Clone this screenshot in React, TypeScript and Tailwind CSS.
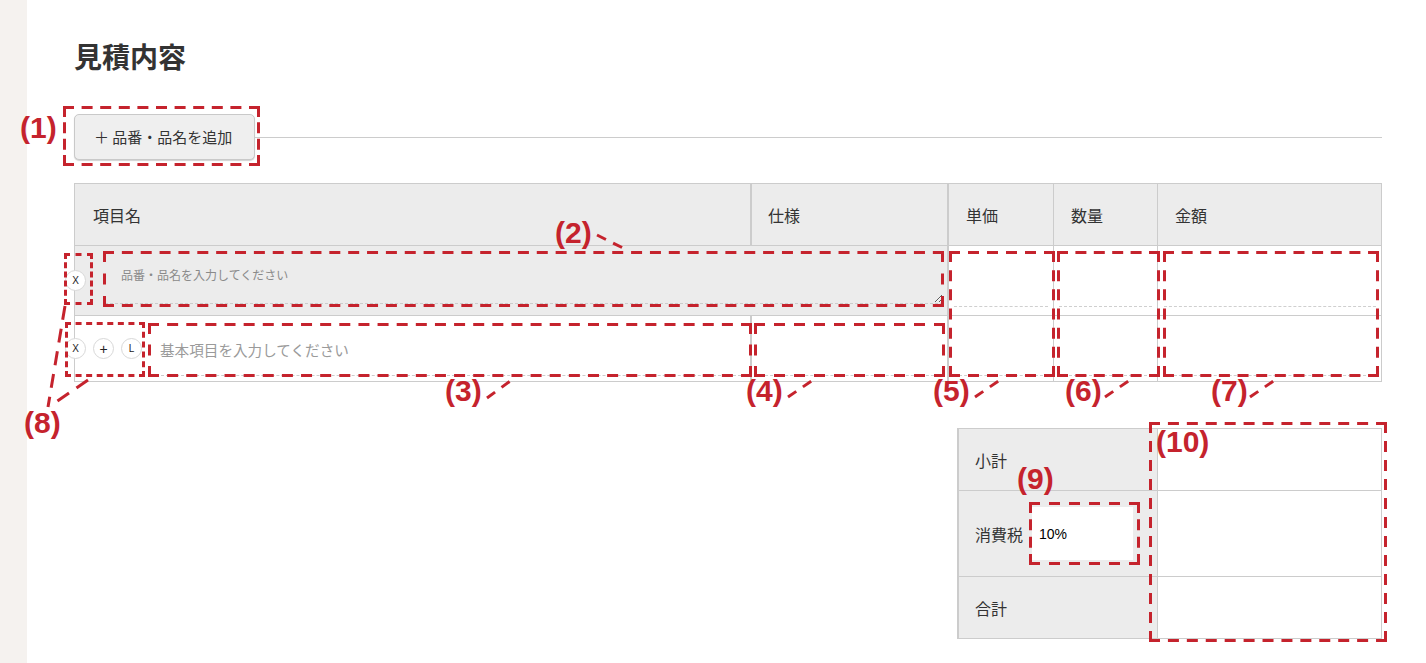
import React from "react";

const RED = "#c5232d";

function Circle({ label, big }: { label: string; big?: boolean }) {
  return (
    <div
      className={`flex h-[21px] w-[21px] shrink-0 items-center justify-center rounded-full border border-[#d8d8d8] bg-white font-['Liberation_Sans',sans-serif] leading-none text-[#222] ${
        big ? "text-[14px]" : "text-[10px]"
      }`}
    >
      {label}
    </div>
  );
}

function Label({ text, className }: { text: string; className: string }) {
  return (
    <div
      className={`pointer-events-none absolute font-['Liberation_Sans',sans-serif] text-[30px] font-bold leading-[30px] text-[#c5232d] ${className}`}
    >
      {text}
    </div>
  );
}

function CellInput({ className }: { className: string }) {
  return <div className={`border-b border-dashed border-[#cfcfcf] ${className}`} />;
}

function dashed(L: number, d: number, g0: number) {
  const n = Math.max(2, Math.round((L + g0) / (d + g0)));
  const g = (L - n * d) / (n - 1);
  return `${d} ${g.toFixed(2)}`;
}

function DashRect({ x1, x2, y1, y2, d = 11, g = 8 }: { x1: number; x2: number; y1: number; y2: number; d?: number; g?: number }) {
  const e = 1.5;
  const w = x2 - x1 + 2 * e;
  const h = y2 - y1 + 2 * e;
  const dw = dashed(w, d, g);
  const dh = dashed(h, d, g);
  return (
    <g>
      <line x1={x1 - e} y1={y1} x2={x2 + e} y2={y1} strokeDasharray={dw} />
      <line x1={x1 - e} y1={y2} x2={x2 + e} y2={y2} strokeDasharray={dw} />
      <line x1={x1} y1={y1 - e} x2={x1} y2={y2 + e} strokeDasharray={dh} />
      <line x1={x2} y1={y1 - e} x2={x2} y2={y2 + e} strokeDasharray={dh} />
    </g>
  );
}

export default function App() {
  return (
    <div className="relative flex h-[663px] w-[1426px] overflow-hidden bg-white font-['Noto_Sans_CJK_JP',sans-serif] text-[#333]">
      <div className="w-[27px] shrink-0 bg-[#f5f2ef]" />
      <div className="flex w-[1399px] shrink-0 flex-col pl-[47px] pr-[44px]">
        <h2 className="pt-[36px] text-[28px] font-bold leading-[40px] text-[#333]">見積内容</h2>

        <div className="mt-[38px] flex h-[46px]">
          <button className="flex h-[46px] w-[181px] shrink-0 items-center rounded-[5px] border border-[#c9c9c9] bg-[#efefef] pl-[19px] text-[15px] text-[#333] shadow-[0_1px_1px_rgba(0,0,0,0.18)]">
            ＋ 品番・品名を追加
          </button>
          <div className="mt-[23px] h-px flex-1 bg-[#cccccc]" />
        </div>

        <div className="mt-[23px] flex">
          {/* left table */}
          <div className="w-[874px] shrink-0 border border-[#cccccc]">
            <div className="flex h-[62px] border-b border-[#cccccc] bg-[#ececec] text-[16px]">
              <div className="flex w-[677px] items-center border-r-2 border-[#cccccc] pl-[18px]">項目名</div>
              <div className="flex flex-1 items-center pl-[16px]">仕様</div>
            </div>
            <div className="flex h-[70px] items-center border-b border-[#cccccc] bg-[#ececec]">
              <div className="ml-[-10px]">
                <Circle label="X" />
              </div>
              <textarea
                className="mb-[5px] ml-[19px] mr-[4px] h-[51px] flex-1 border-b border-dashed border-[#cccccc] bg-transparent pl-[16px] pt-[13px] text-[12px] leading-[18px] text-[#333] outline-none placeholder:text-[#8a8a8a]"
                placeholder="品番・品名を入力してください"
              />
            </div>
            <div className="flex h-[65px]">
              <div className="flex w-[677px] items-center border-r-2 border-[#cccccc]">
                <div className="ml-[-10px] flex items-center gap-[7px]">
                  <Circle label="X" />
                  <Circle label="+" big />
                  <Circle label="L" />
                </div>
                <input
                  className="ml-[9px] mr-[4px] mt-[2px] h-[53px] flex-1 border-b border-dashed border-[#cccccc] bg-transparent pl-[9px] text-[14.6px] outline-none placeholder:text-[#9a9a9a]"
                  placeholder="基本項目を入力してください"
                />
              </div>
              <div className="flex flex-1 items-center px-[3px]">
                <CellInput className="mt-[2px] h-[53px] w-full" />
              </div>
            </div>
          </div>

          {/* right table */}
          <div className="w-[434px] shrink-0 border border-[#cccccc]">
            <div className="flex h-[62px] border-b border-[#cccccc] bg-[#ececec] text-[16px]">
              <div className="flex w-[105px] items-center border-r border-[#cccccc] pl-[17px]">単価</div>
              <div className="flex w-[104px] items-center border-r border-[#cccccc] pl-[17px]">数量</div>
              <div className="flex flex-1 items-center pl-[17px]">金額</div>
            </div>
            <div className="flex h-[70px] border-b border-[#cccccc]">
              <div className="w-[105px] border-r border-[#cccccc] px-[5px] pt-[6px]">
                <CellInput className="h-[55px]" />
              </div>
              <div className="w-[104px] border-r border-[#cccccc] px-[5px] pt-[6px]">
                <CellInput className="h-[55px]" />
              </div>
              <div className="flex-1 pl-[6px] pr-[5px] pt-[6px]">
                <CellInput className="h-[55px]" />
              </div>
            </div>
            <div className="flex h-[65px]">
              <div className="w-[105px] border-r border-[#cccccc] px-[5px] pt-[6px]">
                <CellInput className="h-[54px]" />
              </div>
              <div className="w-[104px] border-r border-[#cccccc] px-[5px] pt-[6px]">
                <CellInput className="h-[54px]" />
              </div>
              <div className="flex-1 pl-[6px] pr-[5px] pt-[6px]">
                <CellInput className="h-[54px]" />
              </div>
            </div>
          </div>
        </div>

        {/* summary */}
        <div className="mt-[46px] flex justify-end">
          <div className="w-[425px] border border-l-2 border-[#cccccc] text-[16px]">
            <div className="flex h-[62px] border-b border-[#cccccc]">
              <div className="flex w-[199px] items-center border-r border-[#cccccc] bg-[#ececec] pl-[16px]">小計</div>
              <div className="flex-1" />
            </div>
            <div className="flex h-[86px] border-b border-[#cccccc]">
              <div className="flex w-[199px] items-center border-r border-[#cccccc] bg-[#ececec] pl-[16px]">
                <span>消費税</span>
                <input
                  readOnly
                  defaultValue="10%"
                  className="ml-[9px] h-[53px] w-[101px] bg-white pl-[7px] font-['Liberation_Sans',sans-serif] text-[14px] text-black outline-none"
                />
              </div>
              <div className="flex-1" />
            </div>
            <div className="flex h-[61px]">
              <div className="flex w-[199px] items-center border-r border-[#cccccc] bg-[#ececec] pl-[16px]">合計</div>
              <div className="flex-1" />
            </div>
          </div>
        </div>
      </div>

      {/* annotations */}
      <svg className="pointer-events-none absolute left-0 top-0 h-[663px] w-[1426px]" viewBox="0 0 1426 663">
        <g fill="none" stroke={RED} strokeWidth="3">
          <DashRect x1={64.5} x2={258.5} y1={107.5} y2={164.5} />
          <DashRect x1={104.5} x2={942.5} y1={252.5} y2={305.5} />
          <DashRect x1={149.5} x2={750.5} y1={324.5} y2={375.5} />
          <DashRect x1={755.5} x2={943.5} y1={324.5} y2={375.5} />
          <DashRect x1={950.5} x2={1053.5} y1={252.5} y2={375.5} />
          <DashRect x1={1058.5} x2={1158.5} y1={252.5} y2={375.5} />
          <DashRect x1={1164.5} x2={1377.5} y1={252.5} y2={375.5} />
          <DashRect x1={1030.5} x2={1138.5} y1={503.5} y2={563.5} />
          <DashRect x1={1150.5} x2={1385.5} y1={423.5} y2={640.5} />
          <DashRect x1={65.5} x2={91.5} y1={254.5} y2={303.5} d={6} g={4} />
          <DashRect x1={66.5} x2={143.5} y1={323.5} y2={375.5} d={6} g={4} />
          <g strokeDasharray="10 8">
            <line x1="597" y1="235" x2="625" y2="249" />
            <line x1="487" y1="398" x2="513" y2="379" />
            <line x1="788" y1="397" x2="813" y2="380" />
            <line x1="975" y1="397" x2="1000" y2="380" />
            <line x1="1105" y1="397" x2="1130" y2="380" />
            <line x1="1250" y1="397" x2="1275" y2="380" />
          </g>
          <g strokeDasharray="14 9">
            <line x1="65" y1="306" x2="48" y2="407" />
            <line x1="88" y1="380" x2="50" y2="406" />
          </g>
        </g>
      </svg>

      <Label text="(1)" className="left-[20px] top-[113px]" />
      <Label text="(2)" className="left-[555px] top-[218px]" />
      <Label text="(3)" className="left-[445px] top-[376px]" />
      <Label text="(4)" className="left-[746px] top-[376px]" />
      <Label text="(5)" className="left-[933px] top-[376px]" />
      <Label text="(6)" className="left-[1065px] top-[376px]" />
      <Label text="(7)" className="left-[1211px] top-[376px]" />
      <Label text="(8)" className="left-[24px] top-[408px]" />
      <Label text="(9)" className="left-[1017px] top-[464px]" />
      <Label text="(10)" className="left-[1156px] top-[427px]" />
    </div>
  );
}
